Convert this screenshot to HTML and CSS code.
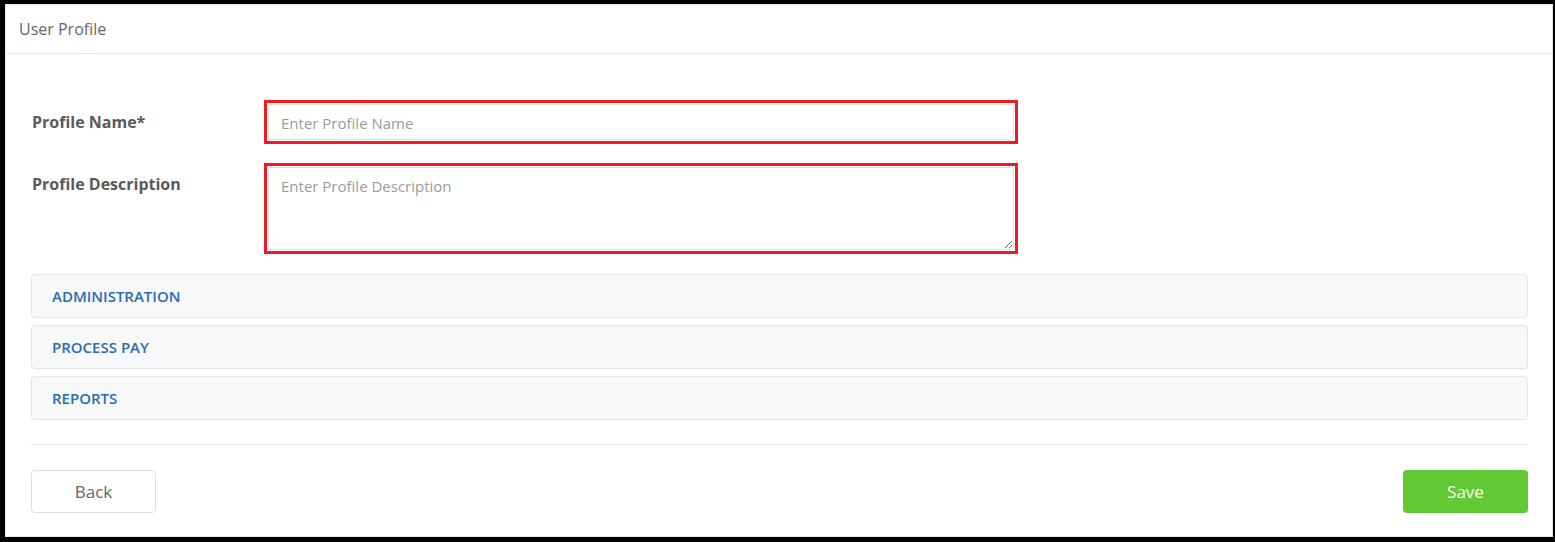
FILE: index.html
```html
<!DOCTYPE html>
<html lang="en">
<head>
    <meta charset="UTF-8">
    <meta name="viewport" content="width=device-width, initial-scale=1.0">
    <title>User Profile</title>
    <link rel="stylesheet" href="styles.css">
</head>
<body>
    <div class="card">
        <div class="card-header">User Profile</div>

        <div class="card-body">
            <div class="form-row">
                <label class="form-label" for="profileName">Profile Name*</label>
                <div class="highlight">
                    <input class="form-input" id="profileName" type="text" placeholder="Enter Profile Name">
                </div>
            </div>

            <div class="form-row">
                <label class="form-label" for="profileDesc">Profile Description</label>
                <div class="highlight">
                    <textarea class="form-input form-textarea" id="profileDesc" placeholder="Enter Profile Description"></textarea>
                </div>
            </div>

            <div class="sections">
                <div class="section-panel">ADMINISTRATION</div>
                <div class="section-panel">PROCESS PAY</div>
                <div class="section-panel">REPORTS</div>
            </div>

            <hr class="divider">

            <div class="actions">
                <button class="btn btn-back" id="backBtn">Back</button>
                <button class="btn btn-save" id="saveBtn">Save</button>
            </div>
        </div>
    </div>
</body>
</html>
```

FILE: styles.css
```css
html, body {
    height: 100%;
}
body {
    font-family: "Open Sans", Arial, sans-serif;
    margin: 0;
    padding: 4px 2px 5px 5px;
    box-sizing: border-box;
    background-color: #000;
}
.card {
    height: 100%;
    box-sizing: border-box;
    background-color: #fff;
    border: 1px solid #e4e4e4;
}
.card-header {
    height: 48px;
    padding-left: 13px;
    display: flex;
    align-items: center;
    font-size: 16px;
    color: #666;
    border-bottom: 1px solid #e6e6e6;
}
.card-body {
    padding: 46px 24px 0 25px;
}
.form-row {
    display: flex;
    margin-bottom: 19px;
}
.form-row + .form-row {
    margin-bottom: 20px;
}
.form-label {
    width: 233px;
    padding-left: 1px;
    box-sizing: border-box;
    padding-top: 11px;
    font-size: 16px;
    line-height: 22px;
    font-weight: 700;
    color: #5a5a5a;
}
.form-row + .form-row .form-label {
    padding-top: 10px;
}
.highlight {
    width: 754px;
    box-sizing: border-box;
    border: 3px solid #ed1c24;
    padding: 1px;
}
.form-input {
    display: block;
    width: 100%;
    height: 36px;
    box-sizing: border-box;
    padding: 1px 12px 0;
    font-family: "Open Sans", Arial, sans-serif;
    font-size: 15px;
    color: #555;
    border: 1px solid #e0e0e0;
    border-radius: 3px;
    outline: none;
}
.form-input::placeholder {
    color: #9a9a9a;
}
.form-textarea {
    height: 83px;
    padding-top: 7px;
    line-height: 22px;
    resize: vertical;
}
.sections {
    display: flex;
    flex-direction: column;
    gap: 7px;
}
.section-panel {
    height: 44px;
    box-sizing: border-box;
    display: flex;
    align-items: center;
    padding-left: 20px;
    background-color: #f7f8fa;
    border: 1px solid #e2e4e7;
    border-radius: 4px;
    font-size: 15px;
    font-weight: 600;
    color: #2b6cb0;
}
.divider {
    border: none;
    border-top: 1px solid #e8e8e8;
    margin: 24px 0 25px;
}
.actions {
    display: flex;
    justify-content: space-between;
}
.btn {
    width: 125px;
    height: 43px;
    font-family: "Open Sans", Arial, sans-serif;
    font-size: 17px;
    border-radius: 4px;
    cursor: pointer;
}
.btn-back {
    background-color: #fff;
    color: #666;
    border: 1px solid #dedede;
}
.btn-save {
    background-color: #62c934;
    color: #fff;
    border: none;
}
```
